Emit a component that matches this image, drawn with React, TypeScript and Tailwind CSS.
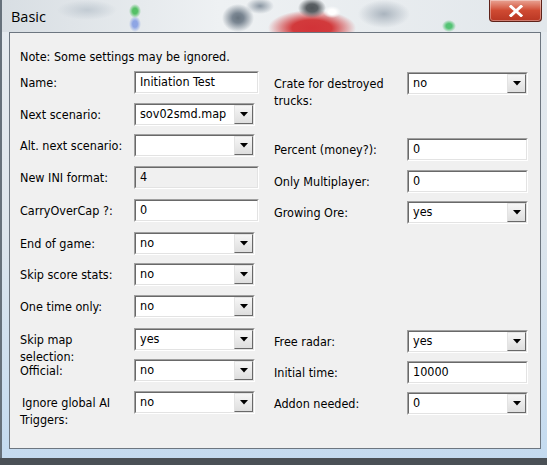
import type { ReactNode } from "react";

const uiFont = "font-['Tahoma','DejaVu_Sans_Condensed','Liberation_Sans',sans-serif] text-[12.5px]";

function Sunken({ width, children, disabled }: { width: string; children: ReactNode; disabled?: boolean }) {
  return (
    <div className={`${width} h-[23px] border border-t-[#a0a0a0] border-l-[#a0a0a0] border-r-white border-b-white`}>
      <div
        className={`flex h-full items-center border border-t-[#696969] border-l-[#696969] border-r-[#e3e3e3] border-b-[#e3e3e3] ${
          disabled ? "bg-[#f0f0f0]" : "bg-white"
        }`}
      >
        {children}
      </div>
    </div>
  );
}

function TextBox({ value, width = "w-[125px]", disabled }: { value: string; width?: string; disabled?: boolean }) {
  return (
    <Sunken width={width} disabled={disabled}>
      <span className="pl-[4px] text-black">{value}</span>
    </Sunken>
  );
}

function Combo({ value, width = "w-[121px]" }: { value: string; width?: string }) {
  return (
    <Sunken width={width}>
      <span className="flex-1 pl-[4px] text-black">{value}</span>
      <div className="flex h-full w-[19px] items-center justify-center border border-t-[#e3e3e3] border-l-[#e3e3e3] border-r-[#696969] border-b-[#696969] bg-gradient-to-b from-[#f6f6f6] to-[#dedede]">
        <svg width="8" height="5" viewBox="0 0 8 5">
          <path d="M0 0h8L4 4.5z" fill="#000" />
        </svg>
      </div>
    </Sunken>
  );
}

type Field = { label: ReactNode; control: ReactNode; h: string };

const leftFields: Field[] = [
  { label: "Name:", control: <TextBox value="Initiation Test" />, h: "h-[32px]" },
  { label: "Next scenario:", control: <Combo value="sov02smd.map" />, h: "h-[31px]" },
  { label: "Alt. next scenario:", control: <Combo value="" />, h: "h-[32px]" },
  { label: "New INI format:", control: <TextBox value="4" disabled />, h: "h-[33px]" },
  { label: "CarryOverCap ?:", control: <TextBox value="0" />, h: "h-[33px]" },
  { label: "End of game:", control: <Combo value="no" />, h: "h-[31px]" },
  { label: "Skip score stats:", control: <Combo value="no" />, h: "h-[32px]" },
  { label: "One time only:", control: <Combo value="no" />, h: "h-[33px]" },
  { label: <>Skip map<br />selection:</>, control: <Combo value="yes" />, h: "h-[31px]" },
  { label: "Official:", control: <Combo value="no" />, h: "h-[32px]" },
  { label: <span className="pl-[2px]">Ignore global AI<br />Triggers:</span>, control: <Combo value="no" />, h: "h-[32px]" },
];

const rightFields: Field[] = [
  { label: <>Crate for destroyed<br />trucks:</>, control: <Combo value="no" />, h: "h-[66px]" },
  { label: "Percent (money?):", control: <TextBox value="0" width="w-[121px]" />, h: "h-[32px]" },
  { label: "Only Multiplayer:", control: <TextBox value="0" width="w-[121px]" />, h: "h-[31px]" },
  { label: "Growing Ore:", control: <Combo value="yes" />, h: "h-[129px]" },
  { label: "Free radar:", control: <Combo value="yes" />, h: "h-[31px]" },
  { label: "Initial time:", control: <TextBox value="10000" width="w-[121px]" />, h: "h-[31px]" },
  { label: "Addon needed:", control: <Combo value="0" />, h: "h-[31px]" },
];

function FieldColumn({ fields, labelWidth }: { fields: Field[]; labelWidth: string }) {
  return (
    <div className="flex flex-col">
      {fields.map((f, i) => (
        <div key={i} className={`flex items-start ${f.h}`}>
          <div className={`${labelWidth} pt-[3px] leading-[17px] text-black`}>{f.label}</div>
          {f.control}
        </div>
      ))}
    </div>
  );
}

export default function App() {
  return (
    <div className={`h-[465px] w-[547px] overflow-hidden bg-[#4a5056] ${uiFont}`}>
      {/* glass frame */}
      <div className="flex h-[458px] flex-col overflow-hidden border-l-2 border-l-[#66717b] bg-gradient-to-b from-[#e6ebef] via-[#dde5ec] to-[#c4dbf0]">
        {/* title bar, with the blurred desktop showing through the glass */}
        <div className="flex h-[32px] items-start justify-between bg-[radial-gradient(ellipse_6px_7px_at_133px_11px,#55c066_0,#55c066_40%,transparent_100%),radial-gradient(ellipse_6px_8px_at_133px_24px,#8ea5e4_0,#8ea5e4_40%,transparent_100%),radial-gradient(ellipse_16px_14px_at_236px_18px,#68747f_0,#7a8692_35%,transparent_100%),radial-gradient(ellipse_14px_8px_at_258px_6px,#8a96a2_0,transparent_100%),radial-gradient(ellipse_9px_6px_at_330px_12px,#ffffff_0,#ffffff_40%,transparent_100%),radial-gradient(ellipse_14px_10px_at_310px_8px,#4f5458_0,#5b6064_40%,transparent_100%),radial-gradient(ellipse_44px_18px_at_310px_28px,#d13338_0,#d23a3c_45%,transparent_100%),radial-gradient(ellipse_26px_14px_at_382px_14px,#aab4be_0,transparent_100%),radial-gradient(ellipse_7px_6px_at_447px_26px,#54c374_0,#54c374_40%,transparent_100%),radial-gradient(ellipse_30px_10px_at_85px_10px,#c2cbd3_0,transparent_100%),linear-gradient(90deg,#d8dee3,#eef1f3_40%,#e2e7eb)]">
          <span className="pl-[9px] pt-[8px] font-['Open_Sans','Noto_Sans',sans-serif] text-[14.5px] leading-[18px] text-black">
            Basic
          </span>
          <div className="mr-[5px] flex h-[22px] w-[53px] items-center justify-center rounded-b-[4px] border border-t-0 border-[#5e2219] bg-gradient-to-b from-[#e8a394] via-[#cf4a32] to-[#b83623] shadow-[inset_0_0_0_1px_rgba(255,255,255,0.35)]">
            <svg width="14" height="12" viewBox="0 0 14 12">
              <path d="M2 1.5l10 9M12 1.5l-10 9" stroke="#fff" strokeWidth="3" strokeLinecap="square" />
            </svg>
          </div>
        </div>

        <div className="flex flex-1 pl-[7px]">
          <div className="flex h-[417px] w-[532px] flex-col border border-[#6d7680] bg-[#f0f0f0] pl-[10px]">
            <div className="pt-[15px] leading-[17px] text-black">Note: Some settings may be ignored.</div>
            <div className="mt-[6px] flex">
              <div className="w-[254px]">
                <FieldColumn fields={leftFields} labelWidth="w-[114px]" />
              </div>
              <div className="pt-[1px]">
                <FieldColumn fields={rightFields} labelWidth="w-[133px]" />
              </div>
            </div>
          </div>
        </div>
      </div>
    </div>
  );
}
